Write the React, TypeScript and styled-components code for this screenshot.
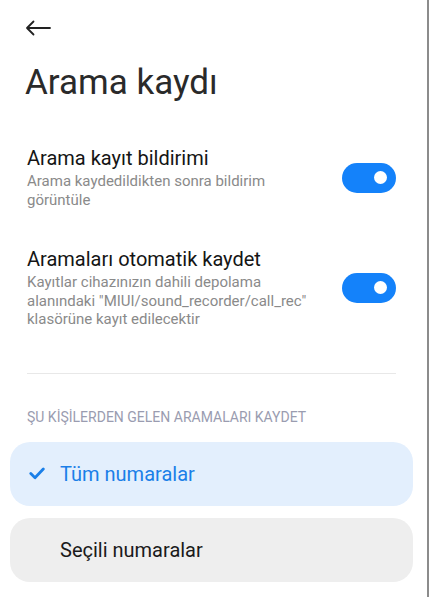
import React from "react";
import styled, { createGlobalStyle } from "styled-components";

const Global = createGlobalStyle`
  html, body { margin: 0; padding: 0; background: #ffffff; }
  body { font-family: Roboto, "Noto Sans", "Liberation Sans", sans-serif; -webkit-font-smoothing: antialiased; }
  * { box-sizing: border-box; }
`;

const Page = styled.div`
  width: 429px;
  min-height: 597px;
  background: #ffffff;
  border-right: 2px solid #8c8c8c;
  display: flex;
  flex-direction: column;
`;

const TopBar = styled.div`
  height: 56px;
  padding: 16px 0 0 24px;
  display: flex;
  align-items: flex-start;
`;

const BackButton = styled.button`
  border: 0;
  background: transparent;
  padding: 0;
  width: 28px;
  height: 24px;
  display: flex;
  align-items: center;
  justify-content: center;
  color: #222;
`;

const Title = styled.h1`
  margin: 6px 0 0 25px;
  font-size: 35px;
  line-height: 42px;
  font-weight: 400;
  color: #2a2a2a;
`;

const SettingRow = styled.div<{ $top: number }>`
  display: flex;
  align-items: center;
  justify-content: space-between;
  padding: 0 31px 0 27px;
  margin-top: ${(p) => p.$top}px;
`;

const TextCol = styled.div`
  display: flex;
  flex-direction: column;
  max-width: 290px;
`;

const RowTitle = styled.div`
  font-size: 20px;
  line-height: 24px;
  color: #151515;
  margin-bottom: 2px;
`;

const RowSub = styled.div`
  font-size: 15px;
  line-height: 18.5px;
  color: #8a8a8a;
`;

const Toggle = styled.div<{ $on: boolean }>`
  width: 54px;
  height: 30px;
  border-radius: 15px;
  background: ${(p) => (p.$on ? "#1482fa" : "#cfcfcf")};
  flex-shrink: 0;
  display: flex;
  align-items: center;
  justify-content: ${(p) => (p.$on ? "flex-end" : "flex-start")};
  padding: 0 9px;
`;

const Knob = styled.div`
  width: 13px;
  height: 13px;
  border-radius: 50%;
  background: #ffffff;
`;

const Divider = styled.hr`
  border: 0;
  height: 1px;
  background: #e8e8e8;
  margin: 44px 31px 0 27px;
`;

const SectionHeader = styled.div`
  margin: 35px 0 0 27px;
  font-size: 14px;
  line-height: 17px;
  color: #9a9cb0;
  text-transform: uppercase;
`;

const OptionList = styled.div`
  display: flex;
  flex-direction: column;
  gap: 12px;
  margin: 16px 14px 0 10px;
`;

const Option = styled.div<{ $selected: boolean }>`
  height: 64px;
  border-radius: 20px;
  background: ${(p) => (p.$selected ? "#e3effd" : "#eeeeee")};
  color: ${(p) => (p.$selected ? "#1a7fe8" : "#1a1a1a")};
  display: flex;
  align-items: center;
  padding-left: 19px;
  font-size: 20px;
`;

const CheckSlot = styled.span`
  width: 31px;
  height: 20px;
  display: flex;
  align-items: center;
  flex-shrink: 0;
`;

const Arrow = () => (
  <svg width="26" height="16" viewBox="0 0 26 16" fill="none">
    <path d="M25 8H2M8.5 1.5L2 8l6.5 6.5" stroke="#222" strokeWidth="1.8" strokeLinecap="round" strokeLinejoin="round" />
  </svg>
);

const Check = () => (
  <svg width="16" height="13" viewBox="0 0 16 13" fill="none">
    <path d="M1.8 6.6l4.2 4.1L14.3 2" stroke="#1a7fe8" strokeWidth="2.8" strokeLinecap="round" strokeLinejoin="round" />
  </svg>
);

export default function App() {
  return (
    <Page>
      <Global />
      <TopBar>
        <BackButton aria-label="Geri">
          <Arrow />
        </BackButton>
      </TopBar>
      <Title>Arama kaydı</Title>
      <SettingRow $top={42}>
        <TextCol>
          <RowTitle>Arama kayıt bildirimi</RowTitle>
          <RowSub>Arama kaydedildikten sonra bildirim görüntüle</RowSub>
        </TextCol>
        <Toggle $on>
          <Knob />
        </Toggle>
      </SettingRow>
      <SettingRow $top={38}>
        <TextCol>
          <RowTitle>Aramaları otomatik kaydet</RowTitle>
          <RowSub>
            Kayıtlar cihazınızın dahili depolama alanındaki "MIUI/sound_recorder/call_rec" klasörüne kayıt edilecektir
          </RowSub>
        </TextCol>
        <Toggle $on>
          <Knob />
        </Toggle>
      </SettingRow>
      <Divider />
      <SectionHeader>Şu kİşİlerden gelen aramaları kaydet</SectionHeader>
      <OptionList>
        <Option $selected>
          <CheckSlot>
            <Check />
          </CheckSlot>
          Tüm numaralar
        </Option>
        <Option $selected={false}>
          <CheckSlot />
          Seçili numaralar
        </Option>
      </OptionList>
    </Page>
  );
}
